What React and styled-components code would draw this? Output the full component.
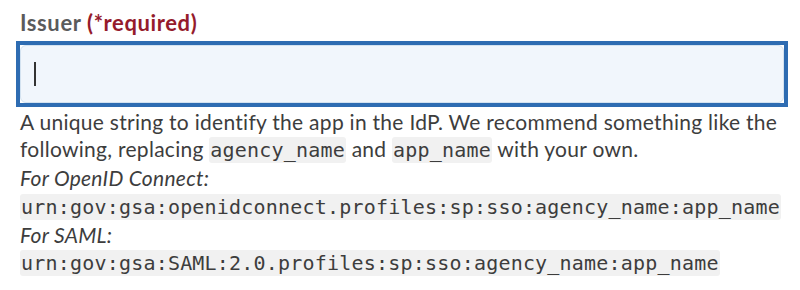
import React from "react";
import styled, { createGlobalStyle } from "styled-components";

const Global = createGlobalStyle`
  html, body { margin: 0; padding: 0; background: #ffffff; }
  body { font-family: "Source Sans Pro", Lato, "Open Sans", sans-serif; }
`;

const Page = styled.div`
  padding: 9px 12px 0 20px;
  width: 800px;
  box-sizing: border-box;
`;

const Label = styled.label`
  display: block;
  font-family: "Source Sans Pro", Lato, sans-serif;
  font-weight: 700;
  font-size: 22px;
  letter-spacing: 0.6px;
  line-height: 28px;
  color: #5b5b5b;
`;

const Required = styled.span`
  color: #951b2c;
`;

const FocusRing = styled.div`
  margin: 4px 0 0 -4px;
  border: 4px solid #2e6cb2;
  background: #ffffff;
  width: 772px;
  box-sizing: border-box;
`;

const Field = styled.div`
  height: 58px;
  box-sizing: border-box;
  border: 1px solid #d3e2f0;
  border-radius: 6px;
  background: #f1f6fc;
  display: flex;
  align-items: center;
  padding-left: 13px;
`;

const Caret = styled.span`
  display: block;
  width: 1.5px;
  height: 24px;
  background: #333333;
`;

const Hint = styled.div`
  margin-top: 1px;
  font-family: "Source Sans Pro", Lato, sans-serif;
  font-size: 21px;
  letter-spacing: 0.28px;
  line-height: 27.2px;
  color: #3d3d3d;
`;

const Para = styled.p`
  margin: 0;
`;

const Em = styled.p`
  margin: 0;
  font-style: italic;
`;

const Code = styled.code`
  font-family: "DejaVu Sans Mono", "Liberation Mono", monospace;
  font-size: 20px;
  letter-spacing: 0.2px;
  background: #f1f1f1;
  color: #3d3d3d;
  padding: 1px 1px;
  border-radius: 3px;
`;

const CodeLine = styled.p`
  margin: 0;
`;

export default function App() {
  return (
    <Page>
      <Global />
      <Label>
        Issuer <Required>(*required)</Required>
      </Label>
      <FocusRing>
        <Field>
          <Caret />
        </Field>
      </FocusRing>
      <Hint>
        <Para>
          A unique string to identify the app in the IdP. We recommend something like the
          following, replacing <Code>agency_name</Code> and <Code>app_name</Code> with your own.
        </Para>
        <Em>For OpenID Connect:</Em>
        <CodeLine>
          <Code>urn:gov:gsa:openidconnect.profiles:sp:sso:agency_name:app_name</Code>
        </CodeLine>
        <Em>For SAML:</Em>
        <CodeLine>
          <Code>urn:gov:gsa:SAML:2.0.profiles:sp:sso:agency_name:app_name</Code>
        </CodeLine>
      </Hint>
    </Page>
  );
}
